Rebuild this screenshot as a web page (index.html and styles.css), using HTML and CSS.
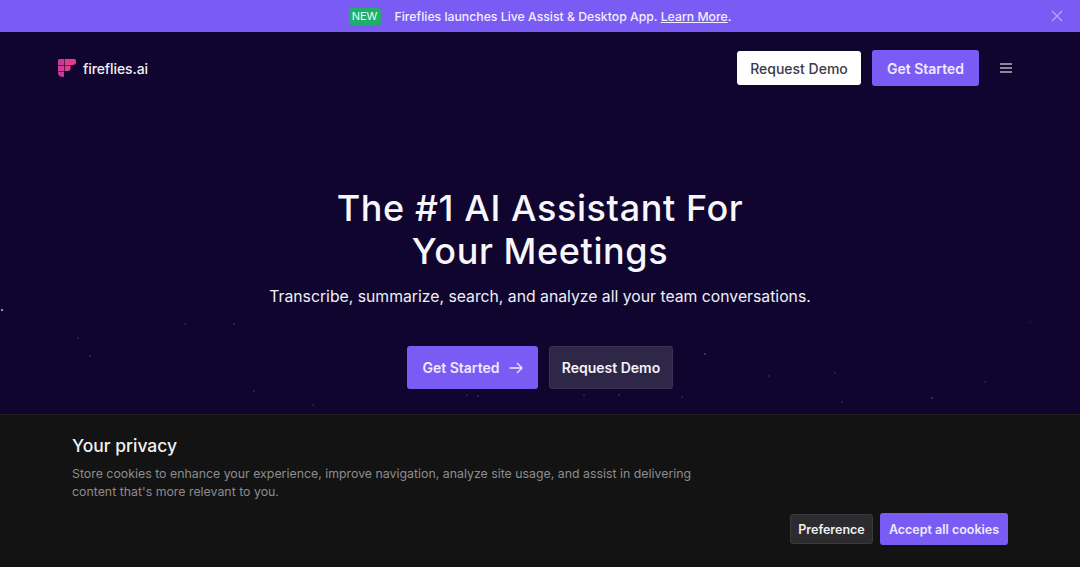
FILE: index.html
```html
<!DOCTYPE html>
<html lang="en">
<head>
  <meta charset="UTF-8">
  <title>Fireflies.ai</title>
  <link rel="stylesheet" href="styles.css">
</head>
<body>
  <div class="promo">
    <span class="promo-badge">NEW</span>
    <span class="promo-text">Fireflies launches Live Assist &amp; Desktop App. <a href="#">Learn More</a>.</span>
    <button class="promo-close" aria-label="Close">
      <svg width="12" height="12" viewBox="0 0 12 12"><path d="M1 1l10 10M11 1L1 11" stroke="#b7a6ff" stroke-width="1.3" fill="none"/></svg>
    </button>
  </div>

  <div class="page">
    <svg class="stars" width="1080" height="535" viewBox="0 0 1080 535">
      <circle cx="2" cy="278" r="1" fill="#c9c6e8"/>
      <g fill="#4a4274">
        <circle cx="78" cy="306" r=".8"/><circle cx="90" cy="324" r=".8"/><circle cx="185" cy="292" r=".7"/>
        <circle cx="234" cy="292" r=".8"/><circle cx="254" cy="359" r=".8"/><circle cx="313" cy="373" r=".7"/>
        <circle cx="705" cy="322" r=".9"/><circle cx="769" cy="344" r=".7"/><circle cx="682" cy="365" r=".8"/>
        <circle cx="835" cy="341" r=".7"/><circle cx="932" cy="366" r=".9"/><circle cx="985" cy="350" r=".7"/>
        <circle cx="467" cy="363" r=".7"/><circle cx="478" cy="364" r=".8"/><circle cx="584" cy="363" r=".7"/>
        <circle cx="619" cy="363" r=".8"/><circle cx="842" cy="370" r=".7"/><circle cx="1030" cy="290" r=".6"/>
      </g>
    </svg>

    <nav class="nav">
      <a class="logo" href="#">
        <svg width="18" height="18" viewBox="0 0 18 18">
          <path d="M0 1.5Q0 0 1.5 0H6V6H0Z" fill="#c53a9c"/>
          <path d="M6.6 0H16.5Q18 0 18 1.5V3Q18 6 15 6H6.6Z" fill="#e23d88"/>
          <path d="M0 6.6H6V12H0Z" fill="#d13d94"/>
          <path d="M6.6 6.6H12.5V9.5Q12.5 12 10 12H6.6Z" fill="#e23d88"/>
          <path d="M0 12.6H6V18Q2.5 18 1 16.5 0 15.5 0 14Z" fill="#c53a9c"/>
        </svg>
        <span>fireflies.ai</span>
      </a>
      <div class="nav-actions">
        <a class="btn btn-white" href="#">Request Demo</a>
        <a class="btn btn-purple" href="#">Get Started</a>
        <button class="menu" aria-label="Menu">
          <svg width="12" height="10" viewBox="0 0 12 10"><path d="M0 1h12M0 5h12M0 9h12" stroke="#b4b2c4" stroke-width="1.3"/></svg>
        </button>
      </div>
    </nav>

    <section class="hero">
      <h1>The #1 AI Assistant For<br>Your Meetings</h1>
      <p>Transcribe, summarize, search, and analyze all your team conversations.</p>
      <div class="hero-actions">
        <a class="btn btn-purple btn-big" href="#">Get Started
          <svg width="14" height="12" viewBox="0 0 14 12"><path d="M.5 6h12.5M8 1l5 5-5 5" stroke="#efeaff" stroke-width="1.3" fill="none"/></svg>
        </a>
        <a class="btn btn-dark btn-big" href="#">Request Demo</a>
      </div>
    </section>
  </div>

  <div class="cookies">
    <div class="cookies-text">
      <h2>Your privacy</h2>
      <p>Store cookies to enhance your experience, improve navigation, analyze site usage, and assist in delivering content that's more relevant to you.</p>
    </div>
    <div class="cookies-actions">
      <a class="btn btn-grey" href="#">Preference</a>
      <a class="btn btn-accept" href="#">Accept all cookies</a>
    </div>
  </div>
</body>
</html>
```

FILE: styles.css
```css
* {
  box-sizing: border-box;
}
html, body {
  height: 100%;
}
body {
  margin: 0;
  overflow: hidden;
  position: relative;
  background: #0f052e;
  font-family: "Inter", "Liberation Sans", sans-serif;
  color: #fff;
}
a {
  text-decoration: none;
  color: inherit;
}
button {
  background: none;
  border: 0;
  padding: 0;
  display: flex;
}

.promo {
  height: 32px;
  background: #7a5cf5;
  display: flex;
  align-items: center;
  justify-content: center;
  gap: 14px;
  position: relative;
}
.promo-badge {
  background: #1fae6c;
  border-radius: 3px;
  width: 32px;
  height: 17px;
  font-size: 11px;
  line-height: 17px;
  text-align: center;
  color: #e9fff3;
}
.promo-text {
  font-size: 12.25px;
  font-weight: 500;
  color: #f2efff;
}
.promo-text a {
  text-decoration: underline;
}
.promo-close {
  position: absolute;
  right: 17px;
  top: 10px;
}

.page {
  position: relative;
}
.stars {
  position: absolute;
  left: 0;
  top: 0;
}

.nav {
  position: relative;
  display: flex;
  justify-content: space-between;
  align-items: center;
  padding: 18px 68px 0 58px;
}
.logo {
  display: flex;
  align-items: center;
  gap: 7px;
  font-size: 14px;
  font-weight: 500;
  letter-spacing: -.1px;
  color: #f0eff6;
}
.nav-actions {
  display: flex;
  align-items: center;
  gap: 11px;
}
.menu {
  margin-left: 10px;
}

.btn {
  display: inline-flex;
  align-items: center;
  justify-content: center;
  gap: 9px;
  border-radius: 3px;
  font-weight: 500;
}
.btn-white {
  width: 124px;
  height: 34px;
  background: #fff;
  color: #3a3a48;
  font-size: 14px;
}
.btn-purple {
  width: 107px;
  height: 36px;
  background: #7a5cf5;
  color: #efeaff;
  font-size: 14px;
  font-weight: 600;
}
.btn-big {
  height: 43px;
}
.hero-actions .btn-purple {
  width: 131px;
}
.btn-dark {
  width: 124px;
  background: #2e2748;
  border: 1px solid #3a3355;
  color: #f4f3f8;
  font-size: 14px;
  font-weight: 600;
}

.hero {
  position: relative;
  display: flex;
  flex-direction: column;
  align-items: center;
  padding-top: 101px;
}
.hero h1 {
  margin: 0;
  font-size: 36px;
  line-height: 43px;
  font-weight: 500;
  letter-spacing: .6px;
  text-align: center;
  color: #f7f6fb;
}
.hero p {
  margin: 12px 0 0;
  font-size: 15.75px;
  line-height: 24px;
  color: #f0eff6;
}
.hero-actions {
  display: flex;
  gap: 11px;
  margin-top: 37px;
}

.cookies {
  position: absolute;
  left: 0;
  right: 0;
  bottom: 0;
  height: 153px;
  background: #131313;
  border-top: 1px solid #1f1f21;
  display: flex;
  justify-content: space-between;
  align-items: flex-end;
  padding: 0 72px 22px;
}
.cookies-text {
  align-self: flex-start;
  width: 640px;
  padding-top: 19px;
}
.cookies h2 {
  margin: 0;
  font-size: 17.5px;
  line-height: 24px;
  font-weight: 500;
  color: #f1f1f1;
}
.cookies p {
  margin: 7px 0 0;
  font-size: 12.35px;
  line-height: 18px;
  color: #8d8d8f;
}
.cookies-actions {
  display: flex;
  align-items: center;
  gap: 7px;
}
.btn-grey {
  width: 83px;
  height: 30px;
  background: #2c2c2e;
  border: 1px solid #3a3a3c;
  color: #f0f0f2;
  font-size: 12.5px;
  font-weight: 600;
}
.btn-accept {
  width: 128px;
  height: 32px;
  background: #7a5cf5;
  color: #efeaff;
  font-size: 12.5px;
  font-weight: 600;
}
```
